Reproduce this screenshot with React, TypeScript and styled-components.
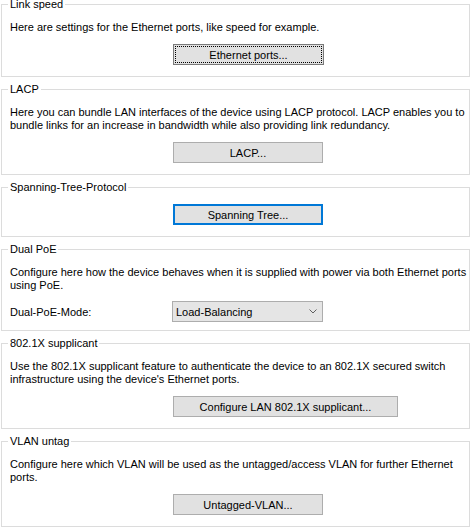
import styled, { createGlobalStyle } from "styled-components";

const GlobalStyle = createGlobalStyle`
  html, body {
    margin: 0;
    padding: 0;
    background: #fff;
  }
  body {
    font-family: "Liberation Sans", Arial, sans-serif;
    font-size: 11px;
    color: #000;
  }
`;

type Action =
  | { kind: "button"; label: string; width: number; variant?: "focus" | "default" }
  | { kind: "select"; label: string; value: string };

type Section = {
  title: string;
  lines: string[];
  action: Action;
};

const sections: Section[] = [
  {
    title: "Link speed",
    lines: ["Here are settings for the Ethernet ports, like speed for example."],
    action: { kind: "button", label: "Ethernet ports...", width: 151, variant: "focus" },
  },
  {
    title: "LACP",
    lines: [
      "Here you can bundle LAN interfaces of the device using LACP protocol. LACP enables you to",
      "bundle links for an increase in bandwidth while also providing link redundancy.",
    ],
    action: { kind: "button", label: "LACP...", width: 150 },
  },
  {
    title: "Spanning-Tree-Protocol",
    lines: [],
    action: { kind: "button", label: "Spanning Tree...", width: 150, variant: "default" },
  },
  {
    title: "Dual PoE",
    lines: [
      "Configure here how the device behaves when it is supplied with power via both Ethernet ports",
      "using PoE.",
    ],
    action: { kind: "select", label: "Dual-PoE-Mode:", value: "Load-Balancing" },
  },
  {
    title: "802.1X supplicant",
    lines: [
      "Use the 802.1X supplicant feature to authenticate the device to an 802.1X secured switch",
      "infrastructure using the device's Ethernet ports.",
    ],
    action: { kind: "button", label: "Configure LAN 802.1X supplicant...", width: 225 },
  },
  {
    title: "VLAN untag",
    lines: [
      "Configure here which VLAN will be used as the untagged/access VLAN for further Ethernet",
      "ports.",
    ],
    action: { kind: "button", label: "Untagged-VLAN...", width: 150 },
  },
];

const App = () => {
  return (
    <Page>
      <GlobalStyle />
      {sections.map((section) => (
        <Group key={section.title} $compact={section.action.kind === "select"}>
          <Legend>{section.title}</Legend>
          {section.lines.length > 0 && (
            <Description>
              {section.lines.map((line) => (
                <Line key={line}>{line}</Line>
              ))}
            </Description>
          )}
          {section.action.kind === "button" ? (
            <ActionRow $afterText={section.lines.length > 0}>
              <Spacer />
              <PushButton $width={section.action.width} $variant={section.action.variant}>
                {section.action.label}
              </PushButton>
            </ActionRow>
          ) : (
            <SelectRow>
              <FieldLabel>{section.action.label}</FieldLabel>
              <Combo>
                <span>{section.action.value}</span>
                <svg width="8" height="5" viewBox="0 0 8 5">
                  <path d="M0.5 0.5 L4 4 L7.5 0.5" fill="none" stroke="#606060" strokeWidth="1" />
                </svg>
              </Combo>
            </SelectRow>
          )}
        </Group>
      ))}
    </Page>
  );
};

export default App;

const Page = styled.div`
  width: 470px;
  box-sizing: border-box;
  padding: 0 0 0 1px;
  display: flex;
  flex-direction: column;
  gap: 8px;
`;

const Group = styled.fieldset<{ $compact: boolean }>`
  margin: 0;
  min-width: 0;
  padding: 12px 8px ${(p) => (p.$compact ? "8px" : "11px")} 8px;
  border: 1px solid #dcdcdc;
  display: flex;
  flex-direction: column;
`;

const Legend = styled.legend`
  padding: 0 2px;
  margin-left: -2px;
  line-height: 9px;
  white-space: nowrap;
`;

const Description = styled.div`
  display: flex;
  flex-direction: column;
  line-height: 13px;
`;

const Line = styled.div`
  white-space: nowrap;
`;

const ActionRow = styled.div<{ $afterText: boolean }>`
  display: flex;
  margin-top: ${(p) => (p.$afterText ? "10px" : "0")};
`;

const Spacer = styled.div`
  width: 163px;
  flex: none;
`;

const PushButton = styled.div<{ $width: number; $variant?: "focus" | "default" }>`
  box-sizing: border-box;
  width: ${(p) => p.$width}px;
  height: 21px;
  display: flex;
  align-items: center;
  justify-content: center;
  background: #e1e1e1;
  border: ${(p) =>
    p.$variant === "default"
      ? "2px solid #0078d7"
      : p.$variant === "focus"
      ? "1px solid #7a7a7a"
      : "1px solid #adadad"};
  outline: ${(p) => (p.$variant === "focus" ? "1px dotted #000" : "none")};
  outline-offset: -3px;
  white-space: nowrap;
`;

const SelectRow = styled.div`
  display: grid;
  grid-template-columns: 162px 151px;
  align-items: center;
  margin-top: 9px;
`;

const FieldLabel = styled.div`
  white-space: nowrap;
`;

const Combo = styled.div`
  box-sizing: border-box;
  height: 21px;
  display: flex;
  align-items: center;
  justify-content: space-between;
  padding: 0 5px 0 3px;
  background: #e5e5e5;
  border: 1px solid #adadad;

  svg {
    flex: none;
  }
`;
